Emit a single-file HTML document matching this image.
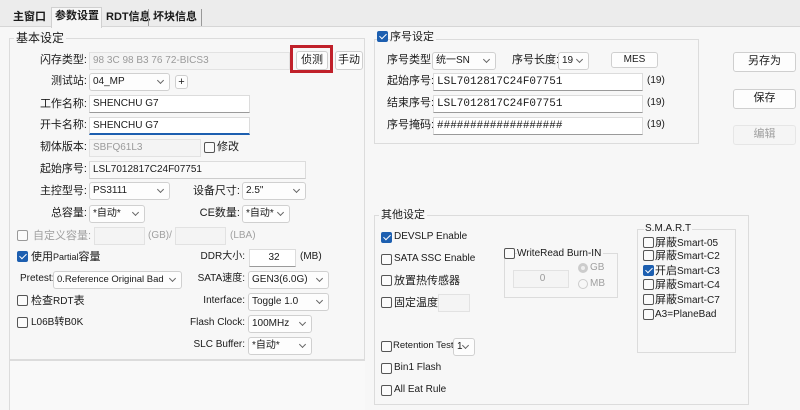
<!DOCTYPE html><html><head><meta charset="utf-8"><style>
*{box-sizing:border-box;margin:0;padding:0}
body{width:800px;height:400px;overflow:hidden;background:#f7f7f7;font-family:"Liberation Sans","Noto Sans CJK SC",sans-serif;font-size:11px;color:#1a1a1a;position:relative}
.a{position:absolute;white-space:nowrap;line-height:14px}
.r{text-align:right}
.in{position:absolute;background:#fff;border:1px solid #dcdcdc;border-bottom:1px solid #9a9a9a;height:18px;line-height:16px;padding-left:3px;font-size:10px;overflow:hidden;white-space:nowrap}
.dis{background:#f4f4f4;color:#9a9a9a;border-color:#e2e2e2}
.sel{position:absolute;background:#fdfdfd;border:1px solid #d0d0d0;border-radius:3px;height:18px;line-height:16px;padding-left:3px;font-size:10px;white-space:nowrap;overflow:hidden}
.sel:after{content:"";position:absolute;right:6px;top:4px;width:4px;height:4px;border-right:1px solid #666;border-bottom:1px solid #666;transform:rotate(45deg)}
.btn{position:absolute;background:#fdfdfd;border:1px solid #cfcfcf;border-radius:3px;text-align:center;line-height:17px;font-size:11px}
.cb{position:absolute;width:11px;height:11px;border:1px solid #555;border-radius:2px;background:#fbfbfb}
.ck{background:#1d5fb0;border-color:#1d5fb0}
.ck:after{content:"";position:absolute;left:3px;top:0px;width:3px;height:6px;border-right:1.5px solid #fff;border-bottom:1.5px solid #fff;transform:rotate(45deg)}
.grp{position:absolute;border:1px solid #dcdcdc}
.mono{font-family:"Liberation Mono",monospace;font-size:11px}
.g{color:#a0a0a0}
.tab{position:absolute;top:10px;font-weight:bold;font-size:11px;line-height:14px;white-space:nowrap}
</style></head><body>
<div style="position:absolute;left:0;top:0;width:800px;height:27px;background:#ececec;border-bottom:1px solid #d6d6d6"></div>
<div class="tab" style="left:13px">主窗口</div>
<div style="position:absolute;left:51px;top:7px;width:51px;height:21px;background:#f7f7f7;border:1px solid #d0d0d0;border-bottom:none"></div>
<div class="tab" style="left:55px;top:9px">参数设置</div>
<div class="tab" style="left:106px">RDT信息</div>
<div style="position:absolute;left:148px;top:9px;width:1px;height:17px;background:#999"></div>
<div class="tab" style="left:153px">坏块信息</div>
<div style="position:absolute;left:201px;top:9px;width:1px;height:17px;background:#999"></div>

<div class="grp" style="left:9px;top:38px;width:356px;height:322px"></div>
<div class="a" style="left:14px;top:31px;background:#f7f7f7;padding:0 2px;font-size:12px">基本设定</div>
<div class="grp" style="left:9px;top:360px;width:356px;height:50px;border-bottom:none;border-right:none;background:#f9f9f9"></div>

<div class="a r" style="left:20px;width:67px;top:53px">闪存类型:</div>
<div class="in dis" style="left:89px;top:52px;width:201px;border-bottom-color:#e2e2e2">98 3C 98 B3 76 72-BICS3</div>
<div style="position:absolute;left:290px;top:45px;width:43px;height:28px;border:3px solid #c0202a"></div>
<div class="btn" style="left:296px;top:51px;width:32px;height:19px">侦测</div>
<div class="btn" style="left:335px;top:51px;width:28px;height:19px">手动</div>

<div class="a r" style="left:20px;width:67px;top:74px">测试站:</div>
<div class="sel" style="left:89px;top:73px;width:81px">04_MP</div>
<div class="btn" style="left:175px;top:75px;width:13px;height:14px;line-height:12px">+</div>

<div class="a r" style="left:20px;width:67px;top:97px">工作名称:</div>
<div class="in" style="left:89px;top:95px;width:161px">SHENCHU G7</div>
<div class="a r" style="left:20px;width:67px;top:118px">开卡名称:</div>
<div class="in" style="left:89px;top:117px;width:161px;border-bottom:2px solid #1d5fb0">SHENCHU G7</div>

<div class="a r" style="left:20px;width:67px;top:140px">韧体版本:</div>
<div class="in dis" style="left:89px;top:139px;width:112px;border-bottom-color:#e2e2e2">SBFQ61L3</div>
<div class="cb" style="left:204px;top:142px"></div><div class="a" style="left:217px;top:140px">修改</div>

<div class="a r" style="left:20px;width:67px;top:162px">起始序号:</div>
<div class="in" style="left:89px;top:161px;width:217px;background:#f9f9f9;border-bottom-color:#ccc">LSL7012817C24F07751</div>

<div class="a r" style="left:20px;width:67px;top:184px">主控型号:</div>
<div class="sel" style="left:89px;top:182px;width:81px">PS3111</div>
<div class="a r" style="left:180px;width:60px;top:184px">设备尺寸:</div>
<div class="sel" style="left:242px;top:182px;width:64px">2.5"</div>

<div class="a r" style="left:20px;width:67px;top:206px">总容量:</div>
<div class="sel" style="left:89px;top:205px;width:56px">*自动*</div>
<div class="a r" style="left:180px;width:60px;top:206px">CE数量:</div>
<div class="sel" style="left:242px;top:205px;width:48px">*自动*</div>

<div class="cb" style="left:17px;top:230px;border-color:#999"></div>
<div class="a g" style="left:33px;top:229px">自定义容量:</div>
<div class="in dis" style="left:94px;top:227px;width:51px;border-bottom-color:#e2e2e2"></div>
<div class="a g" style="left:148px;top:229px;font-size:10px">(GB)/</div>
<div class="in dis" style="left:175px;top:227px;width:51px;border-bottom-color:#e2e2e2"></div>
<div class="a g" style="left:230px;top:229px;font-size:10px">(LBA)</div>

<div class="cb ck" style="left:17px;top:251px"></div>
<div class="a" style="left:31px;top:250px">使用<span style="font-size:9px">Partial</span>容量</div>
<div class="a r" style="left:190px;width:55px;top:250px;font-size:10px">DDR大小:</div>
<div class="in" style="left:249px;top:249px;width:47px;text-align:center">32</div>
<div class="a" style="left:300px;top:250px;font-size:10px">(MB)</div>

<div class="a" style="left:20px;top:272px;font-size:10px">Pretest:</div>
<div class="sel" style="left:53px;top:271px;width:129px;font-size:9.5px">0.Reference Original Bad</div>
<div class="a r" style="left:190px;width:55px;top:272px;font-size:10px">SATA速度:</div>
<div class="sel" style="left:248px;top:271px;width:81px">GEN3(6.0G)</div>

<div class="cb" style="left:17px;top:295px"></div>
<div class="a" style="left:31px;top:294px">检查<span style="font-size:10px">RDT</span>表</div>
<div class="a r" style="left:190px;width:55px;top:294px;font-size:10px">Interface:</div>
<div class="sel" style="left:248px;top:293px;width:81px">Toggle 1.0</div>

<div class="cb" style="left:17px;top:317px"></div>
<div class="a" style="left:31px;top:316px;font-size:10px">L06B转B0K</div>
<div class="a r" style="left:180px;width:65px;top:316px;font-size:10px">Flash Clock:</div>
<div class="sel" style="left:248px;top:315px;width:64px">100MHz</div>
<div class="a r" style="left:180px;width:65px;top:338px;font-size:10px">SLC Buffer:</div>
<div class="sel" style="left:248px;top:337px;width:64px">*自动*</div>

<!-- right -->
<div class="grp" style="left:374px;top:39px;width:325px;height:105px"></div>
<div class="cb ck" style="left:377px;top:31px"></div>
<div class="a" style="left:390px;top:30px;background:#f7f7f7;padding-right:2px">序号设定</div>
<div class="a" style="left:387px;top:53px">序号类型:</div>
<div class="sel" style="left:432px;top:52px;width:64px">统一SN</div>
<div class="a" style="left:512px;top:53px">序号长度:</div>
<div class="sel" style="left:558px;top:52px;width:31px">19</div>
<div class="btn" style="left:611px;top:52px;width:47px;height:16px;line-height:14px;font-size:10px">MES</div>
<div class="a" style="left:387px;top:74px">起始序号:</div>
<div class="in mono" style="left:433px;top:73px;width:210px">LSL7012817C24F07751</div>
<div class="a" style="left:647px;top:74px;font-size:10px">(19)</div>
<div class="a" style="left:387px;top:96px">结束序号:</div>
<div class="in mono" style="left:433px;top:95px;width:210px">LSL7012817C24F07751</div>
<div class="a" style="left:647px;top:96px;font-size:10px">(19)</div>
<div class="a" style="left:387px;top:118px">序号掩码:</div>
<div class="in mono" style="left:433px;top:117px;width:210px">###################</div>
<div class="a" style="left:647px;top:118px;font-size:10px">(19)</div>

<div class="btn" style="left:733px;top:52px;width:63px;height:20px">另存为</div>
<div class="btn" style="left:733px;top:89px;width:63px;height:20px">保存</div>
<div class="btn g" style="left:733px;top:125px;width:63px;height:20px;border-color:#e6e6e6;background:#f5f5f5">编辑</div>

<div class="grp" style="left:374px;top:215px;width:375px;height:190px"></div>
<div class="a" style="left:379px;top:208px;background:#f7f7f7;padding:0 2px">其他设定</div>
<div class="cb ck" style="left:381px;top:232px"></div><div class="a" style="left:394px;top:230px;font-size:10px">DEVSLP Enable</div>
<div class="cb" style="left:381px;top:254px"></div><div class="a" style="left:394px;top:252px;font-size:10px">SATA SSC Enable</div>
<div class="cb" style="left:381px;top:275px"></div><div class="a" style="left:394px;top:274px">放置热传感器</div>
<div class="cb" style="left:381px;top:297px"></div><div class="a" style="left:394px;top:296px">固定温度:</div>
<div class="in dis" style="left:438px;top:294px;width:32px;border-bottom-color:#e2e2e2"></div>
<div class="cb" style="left:381px;top:341px"></div><div class="a" style="left:393px;top:339px;font-size:9.5px">Retention Test</div>
<div class="sel" style="left:453px;top:338px;width:22px">1</div>
<div class="cb" style="left:381px;top:363px"></div><div class="a" style="left:394px;top:361px;font-size:10px">Bin1 Flash</div>
<div class="cb" style="left:381px;top:385px"></div><div class="a" style="left:394px;top:383px;font-size:10px">All Eat Rule</div>

<div class="grp" style="left:504px;top:253px;width:114px;height:45px"></div>
<div class="cb" style="left:504px;top:248px"></div>
<div class="a" style="left:517px;top:247px;font-size:10px;background:#f7f7f7;padding-right:2px">WriteRead Burn-IN</div>
<div class="in dis" style="left:513px;top:270px;width:56px;text-align:center;border-bottom-color:#e2e2e2">0</div>
<div style="position:absolute;left:578px;top:263px;width:10px;height:10px;border-radius:50%;border:3px solid #ccc;background:#eee"></div>
<div class="a g" style="left:590px;top:261px;font-size:10px">GB</div>
<div style="position:absolute;left:578px;top:279px;width:10px;height:10px;border-radius:50%;border:1px solid #ccc"></div>
<div class="a g" style="left:590px;top:277px;font-size:10px">MB</div>

<div class="grp" style="left:637px;top:229px;width:99px;height:124px"></div>
<div class="a" style="left:644px;top:222px;font-size:10px;background:#f7f7f7;padding:0 1px">S.M.A.R.T</div>
<div class="cb" style="left:643px;top:237px"></div><div class="a" style="left:655px;top:236px">屏蔽<span style="font-size:10px">Smart-05</span></div>
<div class="cb" style="left:643px;top:250px"></div><div class="a" style="left:655px;top:249px">屏蔽<span style="font-size:10px">Smart-C2</span></div>
<div class="cb ck" style="left:643px;top:265px"></div><div class="a" style="left:655px;top:264px">开启<span style="font-size:10px">Smart-C3</span></div>
<div class="cb" style="left:643px;top:279px"></div><div class="a" style="left:655px;top:278px">屏蔽<span style="font-size:10px">Smart-C4</span></div>
<div class="cb" style="left:643px;top:294px"></div><div class="a" style="left:655px;top:293px">屏蔽<span style="font-size:10px">Smart-C7</span></div>
<div class="cb" style="left:643px;top:309px"></div><div class="a" style="left:655px;top:308px;font-size:10px">A3=PlaneBad</div>
</body></html>
